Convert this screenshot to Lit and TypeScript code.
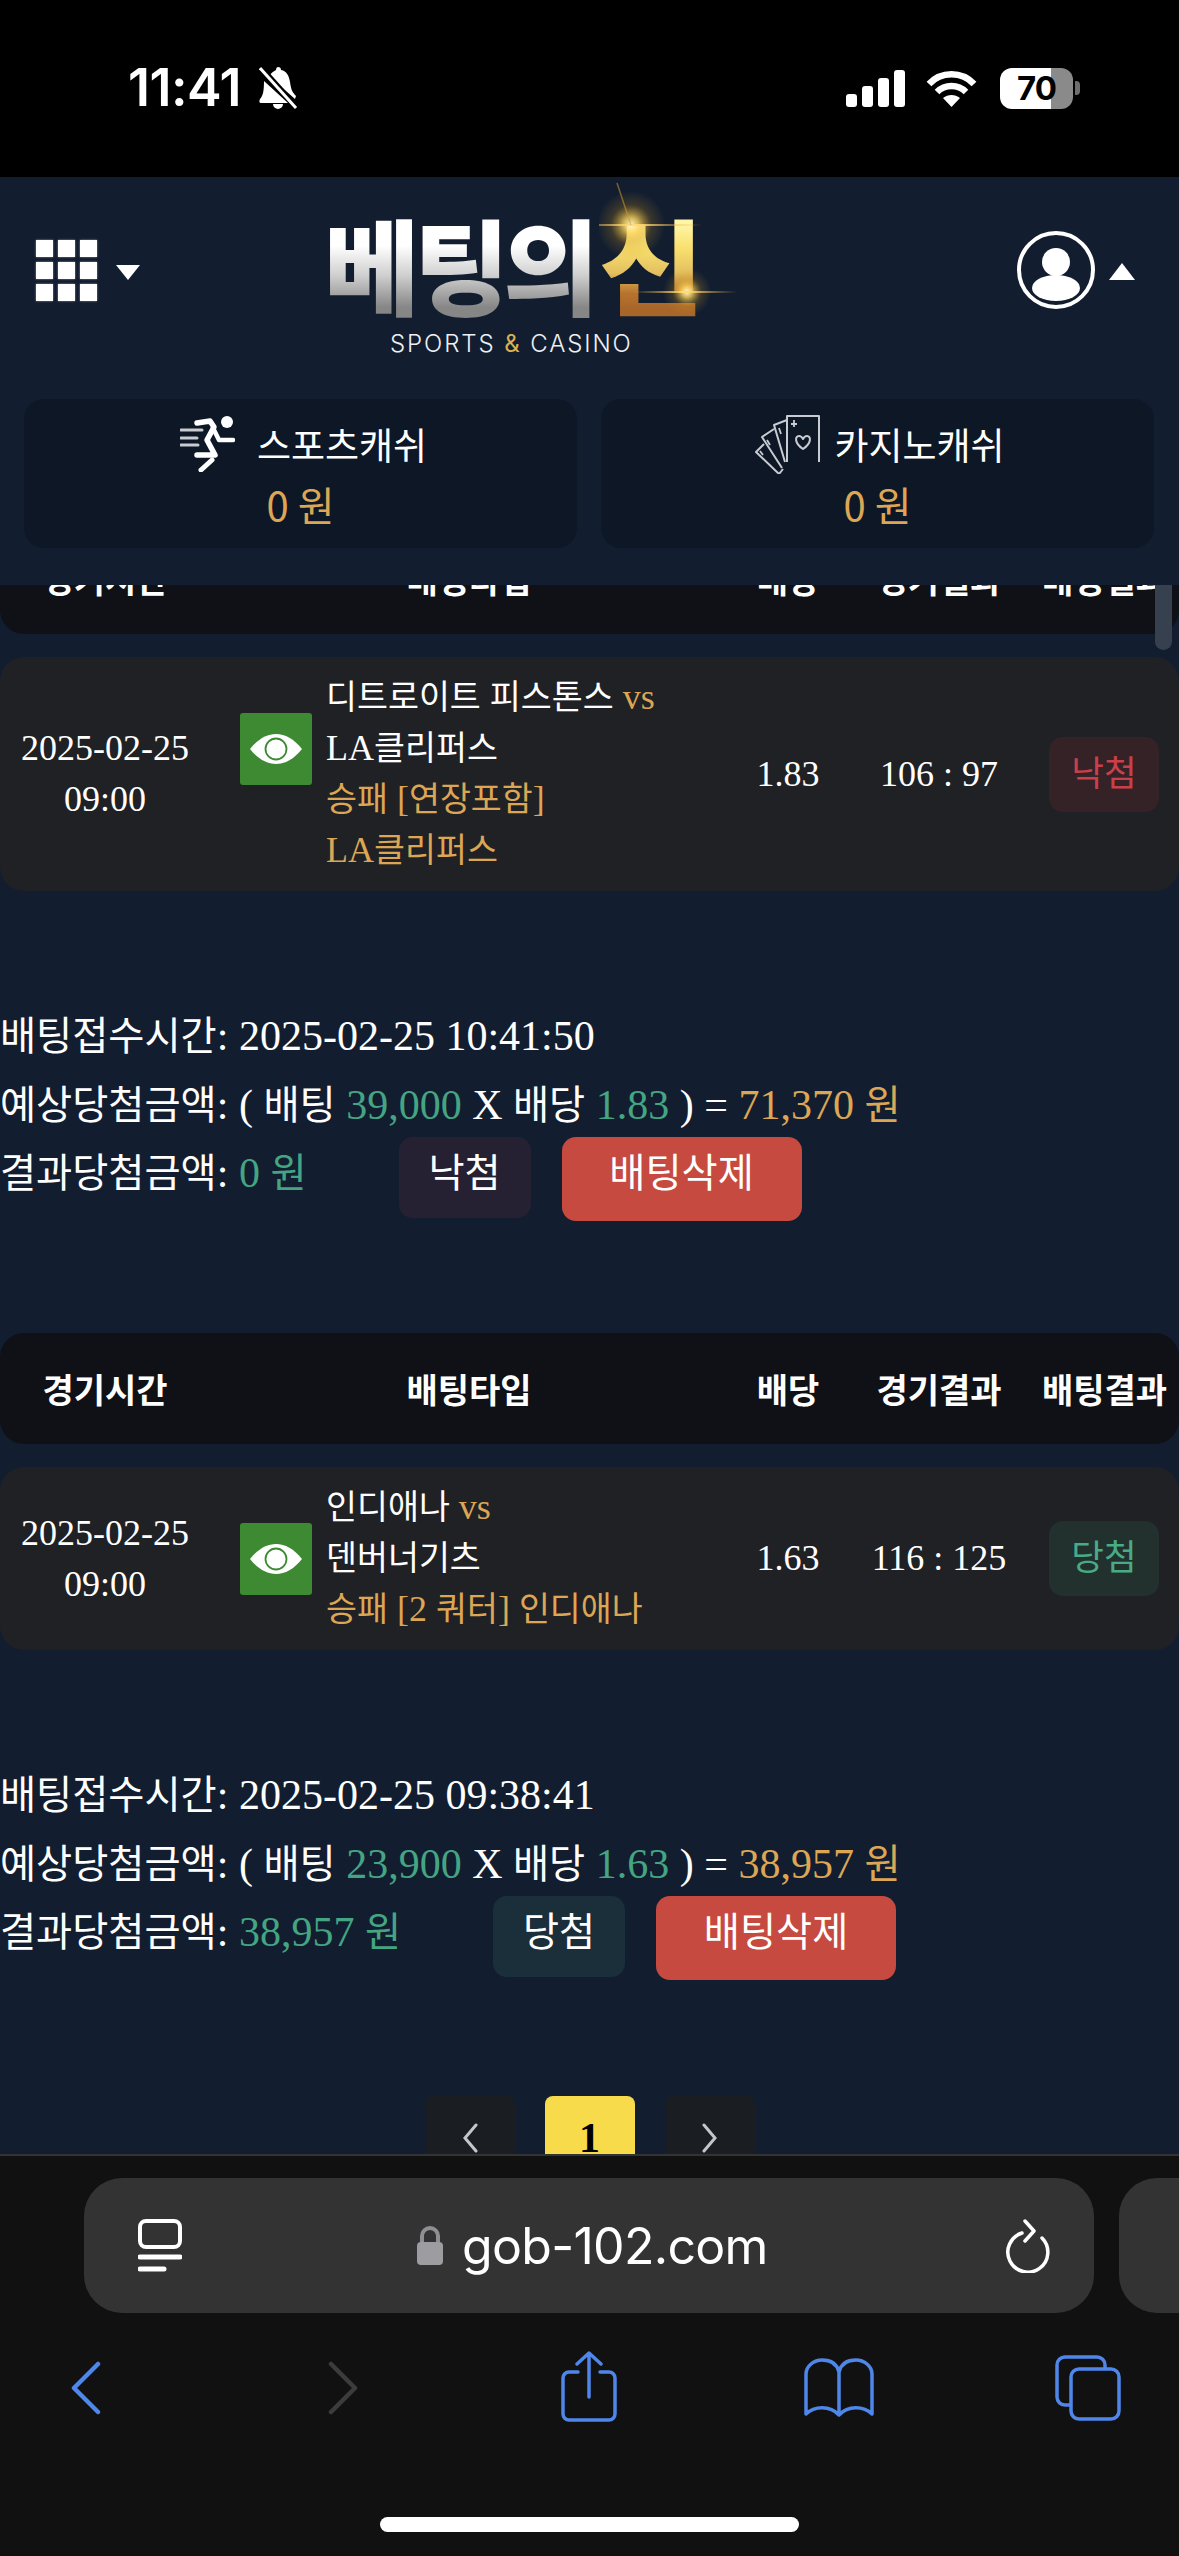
import { LitElement, html, css } from "lit";
import { customElement } from "lit/decorators.js";

const t = (s: string) =>
  s.split(/([가-힣]+)/).map((p, i) => (i % 2 ? html`<span class="k">${p}</span>` : p));

const eye = html`<svg class="eye" viewBox="0 0 72 72"><path d="M10 36C18 26 27 21 36 21s18 5 26 15c-8 10-17 15-26 15S18 46 10 36Z" fill="#fff"/><circle cx="36" cy="36" r="10.500" fill="none" stroke="#3d8a33" stroke-width="1.800"/><path d="M36 29a7 7 0 1 0 7 7h-5l-2-2Z" fill="#fff"/></svg>`;

interface Bet {
  teams: string[];
  picks: string[];
  odds: string;
  score: string;
  won: boolean;
  time: string;
  stake: string;
  win: string;
  result: string;
}
const bets: Bet[] = [
  { teams: ["디트로이트 피스톤스", "LA클리퍼스"], picks: ["승패 [연장포함]", "LA클리퍼스"], odds: "1.83", score: "106 : 97", won: false, time: "2025-02-25 10:41:50", stake: "39,000", win: "71,370", result: "0" },
  { teams: ["인디애나", "덴버너기츠"], picks: ["승패 [2 쿼터] 인디애나"], odds: "1.63", score: "116 : 125", won: true, time: "2025-02-25 09:38:41", stake: "23,900", win: "38,957", result: "38,957" },
];

@customElement("app-root")
export class AppRoot extends LitElement {
  static styles = css`
    :host { display: flex; flex-direction: column; width: 1179px; height: 2556px; overflow: hidden; background: #121e30; color: #fff; font-family: "Liberation Serif", "Noto Sans CJK KR", serif; }
    .k { font-family: "Noto Sans CJK KR", sans-serif; font-size: 0.935em; line-height: 1; }
    svg { display: block; flex: none; }

    .status { height: 177px; flex: none; background: #000; display: flex; align-items: flex-start; padding: 67px 99px 0 128px; box-sizing: border-box; font-family: Inter, sans-serif; }
    .time { font-size: 52px; font-weight: 600; line-height: 42px; letter-spacing: -0.5px; width: 131px; }
    .right { margin-left: auto; display: flex; align-items: center; height: 42px; }
    .wifi { margin-left: 21px; }
    .batt { margin-left: 23px; width: 73px; height: 41px; border-radius: 12px; background: linear-gradient(90deg, #fff 70%, #8a8a8a 70%); color: #000; font-size: 33px; font-weight: 700; line-height: 41px; text-align: center; letter-spacing: -1px; }
    .tip { width: 5px; height: 14px; margin-left: 2px; background: #6e6e6e; border-radius: 0 4px 4px 0; }

    .head { height: 408px; flex: none; box-sizing: border-box; background: #121e30; position: relative; z-index: 1; }
    .top { height: 222px; display: flex; align-items: flex-start; padding: 0 44px 0 36px; }
    .grid { margin-top: 63px; display: grid; grid-template-columns: repeat(3, 17px); grid-auto-rows: 17px; gap: 5px 5px; }
    .grid i { background: #fff; box-shadow: 0 0 2px #fff8; }
    .tri-d { margin: 88px 0 0 19px; width: 0; height: 0; border-left: 12px solid transparent; border-right: 12px solid transparent; border-top: 15px solid #fff; }
    .logo { position: relative; margin: 24px 0 0 184px; width: 372px; display: flex; flex-direction: column; align-items: flex-start; }
    .word { display: flex; flex-wrap: nowrap; white-space: nowrap; font-family: "Noto Sans CJK KR", sans-serif; font-weight: 900; font-size: 104px; line-height: 124px; letter-spacing: -6px; }
    .w1 { flex: none; background: linear-gradient(180deg, #fff 36%, #cfcfcf 60%, #868686 86%); -webkit-background-clip: text; background-clip: text; color: transparent; }
    .w2 { flex: none; display: inline-block; margin-left: 6px; letter-spacing: 0; transform-origin: left center; transform: scaleX(1.1); background: linear-gradient(180deg, #fff6a8 18%, #f8e06e 38%, #e4c060 58%, #b8742e 74%, #a9662a 86%); -webkit-background-clip: text; background-clip: text; color: transparent; }
    .tag { margin: 3px 0 0 66px; font-family: Inter, sans-serif; font-weight: 300; font-size: 24px; line-height: 32px; letter-spacing: 1.9px; color: #eef0f3; white-space: nowrap; }
    .tag b { font-weight: 400; color: #d9b14e; }
    .glow { position: absolute; left: 275px; top: -24px; pointer-events: none; }
    .prof { margin: 54px 0 0 auto; }
    .tri-u { margin: 86px 0 0 14px; width: 0; height: 0; border-left: 13px solid transparent; border-right: 13px solid transparent; border-bottom: 17px solid #fff; }

    .cards { display: flex; gap: 24px; padding: 0 25px 0 24px; }
    .card { flex: 1; height: 149px; box-sizing: border-box; padding-top: 15px; border-radius: 20px; background: #0d1726; font-family: "Noto Sans CJK KR", sans-serif; font-size: 37px; line-height: 60px; text-align: center; }
    .cl { display: flex; justify-content: center; align-items: center; height: 60px; }
    .g1 { gap: 22px; padding-left: 6px; }
    .g2 { gap: 14px; padding-left: 5px; }
    .amt { color: #dca655; font-size: 40px; }

    .scroll { flex: 1; min-height: 0; overflow: hidden; position: relative; font-size: 36px; }
    .inner { margin-top: -62px; }
    .bar { position: absolute; right: 7px; top: 0; width: 17px; height: 65px; border-radius: 0 0 9px 9px; background: #37404e; }
    .th, .tr { display: grid; grid-template-columns: 210px 518px 120px 182px 149px; align-items: center; text-align: center; }
    .th { height: 111px; border-radius: 24px; background: #0f1116; font-weight: 700; font-family: "Noto Sans CJK KR", sans-serif; font-size: 34px; }
    .tr { grid-template-columns: 210px 116px 402px 120px 182px 149px; margin-top: 23px; padding: 15px 0; background: #202125; border-radius: 24px; line-height: 51px; }
    .icell { height: 153px; align-self: start; display: flex; align-items: center; padding-left: 30px; }
    .eye { width: 72px; height: 72px; background: #3d8a33; border-radius: 3px; }
    .teams { text-align: left; white-space: nowrap; }
    .gold { color: #dca655; }
    .green { color: #45a583; }
    .badge { justify-self: start; margin-left: 19px; width: 110px; height: 75px; border-radius: 14px; line-height: 72px; font-size: 38px; }
    .lost { background: #352226; color: #c8404a; }
    .wonb { background: #22302e; color: #47ab86; }

    .det { margin-top: 111px; font-size: 42px; line-height: 69px; white-space: nowrap; }
    .res { display: flex; align-items: flex-start; margin-top: -3px; height: 84px; margin-bottom: 112px; line-height: 72px; }
    .btn { border-radius: 14px; text-align: center; }
    .b-lost { margin-left: 92px; width: 132px; height: 81px; background: #262132; }
    .b-won { margin-left: 92px; width: 132px; height: 81px; background: #1b2f3a; }
    .b-del { margin-left: 31px; width: 240px; height: 84px; background: #c64a3f; }

    .pager { display: flex; justify-content: center; gap: 30px; margin-top: 116px; }
    .pg { width: 90px; height: 84px; border-radius: 8px; background: #1a1d22; display: flex; justify-content: center; align-items: center; }
    .cur { background: #f8db4a; color: #000; font-weight: 700; font-size: 42px; }

    .safari { height: 402px; flex: none; box-sizing: border-box; background: #111; border-top: 2px solid #333; position: relative; z-index: 1; overflow: hidden; }
    .urls { display: flex; gap: 25px; padding: 22px 0 0 84px; }
    .pill { flex: none; width: 1010px; height: 135px; border-radius: 38px; background: #333; display: flex; align-items: center; box-sizing: border-box; padding-left: 54px; }
    .url { margin-left: 19px; font-family: Inter, sans-serif; font-size: 50px; letter-spacing: -0.7px; color: #fff; }
    .lock { margin-left: 235px; }
    .ref { margin-left: auto; margin-right: 43px; }
    .nav { display: flex; align-items: flex-start; padding: 38px 0 0 71px; }
    .n2 { margin: 10px 0 0 227px; }
    .n1 { margin-top: 10px; }
    .n3 { margin-left: 203px; }
    .n4 { margin: 7px 0 0 187px; }
    .n5 { margin: 4px 0 0 181px; }
    .home { width: 419px; height: 15px; border-radius: 8px; background: #fff; margin: 95px auto 0; }
  `;

  private glow() {
    return html`<svg class="glow" width="160" height="150" viewBox="0 0 160 150">
      <defs>
        <radialGradient id="gl"><stop offset="0" stop-color="#fff8d8"/><stop offset=".22" stop-color="#ffd860" stop-opacity=".8"/><stop offset=".6" stop-color="#c89020" stop-opacity=".22"/><stop offset="1" stop-color="#c89020" stop-opacity="0"/></radialGradient>
        <linearGradient id="ray" x1="0" x2="1"><stop offset="0" stop-color="#e0a030" stop-opacity="0"/><stop offset=".5" stop-color="#ffdc80"/><stop offset="1" stop-color="#e0a030" stop-opacity="0"/></linearGradient>
      </defs>
      <circle cx="32" cy="48" r="34" fill="url(#gl)"/>
      <rect x="-32" y="47" width="135" height="2" fill="url(#ray)"/>
      <path d="M32 48 18 6" stroke="#d09a30" stroke-opacity=".55" stroke-width="1.500"/>
      <circle cx="88" cy="115" r="24" fill="url(#gl)"/>
      <rect x="33" y="114" width="105" height="2" fill="url(#ray)"/>
    </svg>`;
  }

  private bet(b: Bet) {
    return html`
      <div class="th"><div>경기시간</div><div>배팅타입</div><div>배당</div><div>경기결과</div><div>배팅결과</div></div>
      <div class="tr">
        <div>2025-02-25<br />09:00</div>
        <div class="icell">${eye}</div>
        <div class="teams">
          <div>${t(b.teams[0])} <span class="gold">vs</span></div>
          <div>${t(b.teams[1])}</div>
          ${b.picks.map((p) => html`<div class="gold">${t(p)}</div>`)}
        </div>
        <div>${b.odds}</div>
        <div>${b.score}</div>
        <div class="badge ${b.won ? "wonb" : "lost"}">${t(b.won ? "당첨" : "낙첨")}</div>
      </div>
      <div class="det">
        <div>${t("배팅접수시간")}: ${b.time}</div>
        <div>${t("예상당첨금액")}: ( ${t("배팅")} <span class="green">${b.stake}</span> X ${t("배당")} <span class="green">${b.odds}</span> ) = <span class="gold">${b.win} ${t("원")}</span></div>
        <div class="res">
          <div>${t("결과당첨금액")}: <span class="green">${b.result} ${t("원")}</span></div>
          <div class="btn ${b.won ? "b-won" : "b-lost"}">${t(b.won ? "당첨" : "낙첨")}</div>
          <div class="btn b-del">${t("배팅삭제")}</div>
        </div>
      </div>`;
  }

  render() {
    const blue = "#4f86ea";
    return html`
      <div class="status">
        <div class="time">11:41</div>
        <svg width="39" height="42" viewBox="0 0 39 42" fill="#fff"><path d="M19 0c2 0 3 1 3 3 6 1 8 6 9 12 1 7 2 10 6 14l-1 3-26-23c2-3 5-5 7-6 0-2 1-3 2-3ZM5 14l24 22H2c-2 0-2-2-1-4 3-3 4-8 4-18ZM14 37h10a5 5 0 0 1-10 0Z"/><path d="M2 1l36 40" stroke="#000" stroke-width="6"/><path d="M1 1l36 40" stroke="#fff" stroke-width="3"/></svg>
        <div class="right">
          <svg width="59" height="37" viewBox="0 0 59 37" fill="#fff"><rect y="24" width="11" height="13" rx="3"/><rect x="16" y="16" width="11" height="21" rx="3"/><rect x="32" y="8" width="11" height="29" rx="3"/><rect x="48" width="11" height="37" rx="3"/></svg>
          <svg class="wifi" width="51" height="37" viewBox="0 0 51 37" fill="none" stroke="#fff" stroke-width="6.500"><path d="M3 14C15 1 36 1 48 14"/><path d="M11 22c8-8 21-8 29 0"/><path d="M25.500 37 17 28c5-4 12-4 17 0Z" fill="#fff" stroke="none"/></svg>
          <div class="batt">70</div><div class="tip"></div>
        </div>
      </div>

      <div class="head">
        <div class="top">
          <div class="grid">${Array.from({ length: 9 }, () => html`<i></i>`)}</div>
          <div class="tri-d"></div>
          <div class="logo">
            <div class="word"><span class="w1">베팅의</span><span class="w2">신</span></div>
            <div class="tag">SPORTS <b>&amp;</b> CASINO</div>
            ${this.glow()}
          </div>
          <svg class="prof" width="78" height="78" viewBox="0 0 78 78" fill="#fff"><circle cx="39" cy="39" r="37" fill="none" stroke="#fff" stroke-width="4"/><circle cx="39" cy="31" r="14"/><ellipse cx="39" cy="57" rx="24" ry="13"/></svg>
          <div class="tri-u"></div>
        </div>
        <div class="cards">
          <div class="card">
            <div class="cl g1">
              <svg width="55" height="56" viewBox="0 0 55 56" fill="none" stroke="#fff" stroke-linecap="round" stroke-linejoin="round"><circle cx="47" cy="6" r="6" fill="#fff" stroke="none"/><path d="M17 7 30 5 34 11 27 24 35 39 17 39" stroke-width="5.500"/><path d="M33 12 39 24 53 24" stroke-width="4.500"/><path d="M32 44 21 54" stroke-width="5"/><path d="M1 14H22M1 22H17M1 29H18" stroke="#c8cbd0" stroke-width="3"/></svg>
              <span>스포츠캐쉬</span>
            </div>
            <div class="amt">0 원</div>
          </div>
          <div class="card">
            <div class="cl g2">
              <svg width="65" height="59" viewBox="0 0 65 59" fill="none" stroke="#c8ccd2" stroke-width="2" stroke-linejoin="round"><path d="M32 47V1H64V47"/><path d="M32 5 19 10 30 47"/><path d="M19 14 7 22 27 53"/><path d="M9 29 1 37 24 59 28 54"/><path d="M48 34c-9-6-8-13-4-13 2 0 3 1 4 3 1-2 2-3 4-3 4 0 5 7-4 13Z"/><path d="M39 5v7M36 9h6M24 13l2 6M12 25l3 5M5 36l3 4" stroke-width="1.800"/></svg>
              <span>카지노캐쉬</span>
            </div>
            <div class="amt">0 원</div>
          </div>
        </div>
      </div>

      <div class="scroll">
        <div class="inner">
          ${bets.map((b) => this.bet(b))}
          <div class="pager">
            <div class="pg"><svg width="16" height="32" viewBox="0 0 16 32" fill="none" stroke="#c4c6c9" stroke-width="3" stroke-linecap="round"><path d="M14 3 3 16 14 29"/></svg></div>
            <div class="pg cur">1</div>
            <div class="pg"><svg width="16" height="32" viewBox="0 0 16 32" fill="none" stroke="#c4c6c9" stroke-width="3" stroke-linecap="round"><path d="M2 3 13 16 2 29"/></svg></div>
          </div>
        </div>
        <div class="bar"></div>
      </div>

      <div class="safari">
        <div class="urls">
          <div class="pill">
            <svg width="44" height="54" viewBox="0 0 44 54" fill="none" stroke="#fff" stroke-linecap="round"><rect x="2" y="2" width="40" height="26" rx="6" stroke-width="4"/><path d="M2 38H42M2 50H26" stroke-width="5"/></svg>
            <svg class="lock" width="26" height="39" viewBox="0 0 26 39" fill="#9c9ca1"><path d="M5 17V10a8 8 0 0 1 16 0v7" fill="none" stroke="#8e8e93" stroke-width="4"/><rect y="16" width="26" height="23" rx="4"/></svg>
            <div class="url">gob-102.com</div>
            <svg class="ref" width="45" height="54" viewBox="0 0 45 54" fill="none" stroke="#fff" stroke-width="3.500" stroke-linecap="round" stroke-linejoin="round"><path d="M16 14A20 20 0 1 0 36 19"/><path d="M19 2 28 12 19 22"/></svg>
          </div>
          <div class="pill"></div>
        </div>
        <div class="nav">
          <svg class="n1" width="30" height="54" viewBox="0 0 30 54" fill="none" stroke="${blue}" stroke-width="4.500" stroke-linecap="round" stroke-linejoin="round"><path d="M27 3 3 27 27 51"/></svg>
          <svg class="n2" width="30" height="54" viewBox="0 0 30 54" fill="none" stroke="#3c3c3e" stroke-width="4.500" stroke-linecap="round" stroke-linejoin="round"><path d="M3 3 27 27 3 51"/></svg>
          <svg class="n3" width="56" height="71" viewBox="0 0 56 71" fill="none" stroke="${blue}" stroke-width="3.500" stroke-linecap="round" stroke-linejoin="round"><path d="M17 21H8a6 6 0 0 0-6 6V63a6 6 0 0 0 6 6H48a6 6 0 0 0 6-6V27a6 6 0 0 0-6-6H39"/><path d="M28 46V2M16 13 28 2 40 13"/></svg>
          <svg class="n4" width="70" height="59" viewBox="0 0 70 59" fill="none" stroke="${blue}" stroke-width="3.500" stroke-linejoin="round"><path d="M35 14C33 6 27 2 18 2 10 2 2 8 2 16V56C10 48 26 47 35 57 44 47 60 48 68 56V16C68 8 60 2 52 2 43 2 37 6 35 14V57"/></svg>
          <svg class="n5" width="66" height="66" viewBox="0 0 66 66" fill="none" stroke="${blue}" stroke-width="3.500"><path d="M16 50H10a8 8 0 0 1-8-8V10a8 8 0 0 1 8-8H42a8 8 0 0 1 8 8v4"/><rect x="16" y="14" width="48" height="50" rx="8"/></svg>
        </div>
        <div class="home"></div>
      </div>
    `;
  }
}
